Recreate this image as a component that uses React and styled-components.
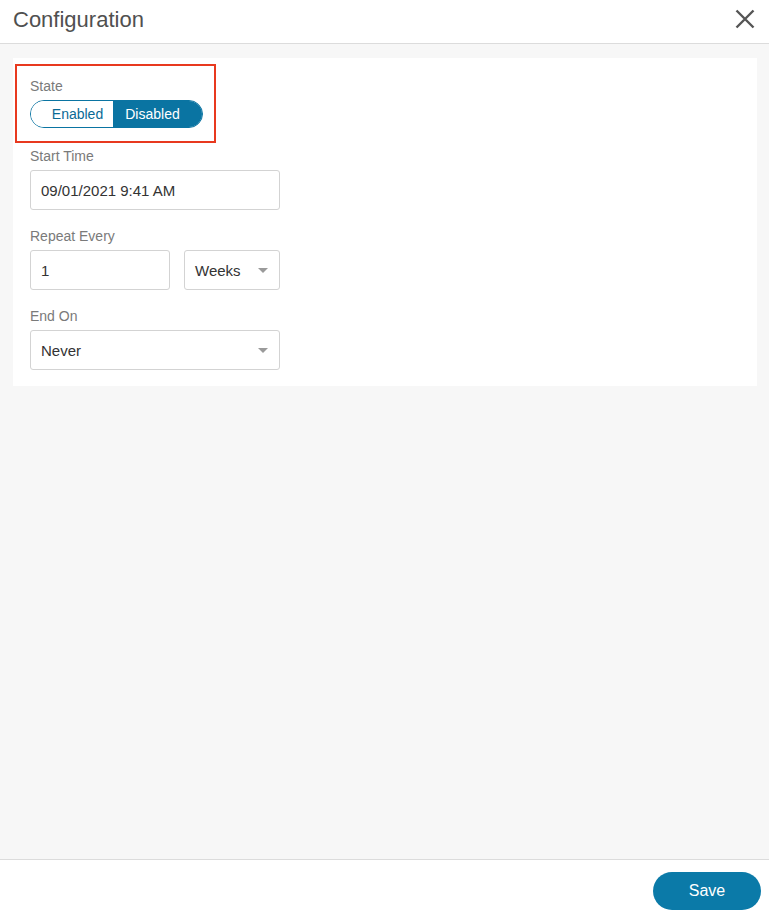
import styled, { createGlobalStyle } from 'styled-components';

const GlobalStyle = createGlobalStyle`
  html, body {
    margin: 0;
    padding: 0;
    height: 100%;
  }
  body {
    font-family: 'Liberation Sans', Arial, sans-serif;
    background: #ffffff;
  }
  #root {
    height: 100%;
  }
`;

const Panel = styled.div`
  display: flex;
  flex-direction: column;
  height: 920px;
  width: 769px;
`;

const Header = styled.header`
  display: flex;
  align-items: center;
  justify-content: space-between;
  height: 43px;
  padding: 0 12px 0 13px;
  border-bottom: 1px solid #dcdcdc;
  background: #fff;
  flex-shrink: 0;
`;

const Title = styled.h1`
  margin: 0;
  font-size: 22px;
  font-weight: 400;
  color: #505050;
  line-height: 1;
  margin-top: -3px;
`;

const CloseButton = styled.button`
  display: flex;
  align-items: center;
  justify-content: center;
  width: 24px;
  height: 24px;
  padding: 0;
  border: 0;
  background: none;
  cursor: pointer;
  margin-top: -5px;
`;

const Body = styled.main`
  flex: 1;
  background: #f7f7f7;
  padding: 14px 12px 0 13px;
`;

const Card = styled.section`
  background: #fff;
  padding: 6px 17px 16px 17px;
`;

const Highlight = styled.div`
  margin: 0 -15px;
  padding: 12px 13px 13px 13px;
  border: 2px solid #e8391f;
  width: 171px;
`;

const Field = styled.div`
  margin-top: ${(p) => p.$top || 0}px;
`;

const Label = styled.div`
  font-size: 14px;
  line-height: 16px;
  color: #7a7a7a;
  margin-bottom: 6px;
`;

const Row = styled.div`
  display: flex;
  gap: 14px;
`;

const Toggle = styled.div`
  display: flex;
  width: 173px;
  height: 28px;
  border: 1px solid #0a74a2;
  border-radius: 14px;
  overflow: hidden;
  box-sizing: border-box;
`;

const ToggleOption = styled.button`
  flex: none;
  box-sizing: border-box;
  width: ${(p) => p.$width}px;
  border: 0;
  margin: 0;
  padding: ${(p) => (p.$active ? '0 10px 0 0' : '0 0 0 11px')};
  font-family: inherit;
  font-size: 14px;
  background: ${(p) => (p.$active ? '#0a74a2' : '#fff')};
  color: ${(p) => (p.$active ? '#fff' : '#0a6a95')};
  cursor: pointer;
`;

const TextInput = styled.input`
  box-sizing: border-box;
  width: ${(p) => p.$width}px;
  height: 40px;
  border: 1px solid #d3d3d3;
  border-radius: 3px;
  padding: 0 10px;
  font-family: inherit;
  font-size: 15px;
  color: #333;
  background: #fff;
  outline: none;
`;

const SelectBox = styled.div`
  box-sizing: border-box;
  position: relative;
  display: flex;
  align-items: center;
  width: ${(p) => p.$width}px;
  height: 40px;
  border: 1px solid #d3d3d3;
  border-radius: 3px;
  padding: 0 10px;
  font-size: 15px;
  color: #333;
  background: #fff;
  cursor: pointer;
`;

const Caret = styled.span`
  position: absolute;
  right: 11px;
  top: 17px;
  width: 0;
  height: 0;
  border-left: 5px solid transparent;
  border-right: 5px solid transparent;
  border-top: 5px solid #9a9a9a;
`;

const Footer = styled.footer`
  display: flex;
  justify-content: flex-end;
  align-items: center;
  height: 61px;
  padding: 2px 8px 0 0;
  border-top: 1px solid #dcdcdc;
  background: #fff;
  flex-shrink: 0;
  box-sizing: border-box;
`;

const SaveButton = styled.button`
  width: 108px;
  height: 38px;
  border: 0;
  border-radius: 19px;
  background: #0b7aa8;
  color: #fff;
  font-family: inherit;
  font-size: 16px;
  cursor: pointer;
`;

function Select({ value, width }) {
  return (
    <SelectBox $width={width}>
      {value}
      <Caret />
    </SelectBox>
  );
}

export default function App() {
  return (
    <>
      <GlobalStyle />
      <Panel>
        <Header>
          <Title>Configuration</Title>
          <CloseButton aria-label="Close">
            <svg width="20" height="20" viewBox="0 0 20 20">
              <path d="M1.5 1.5 L18.5 18.5 M18.5 1.5 L1.5 18.5" stroke="#555" strokeWidth="2.4" fill="none" />
            </svg>
          </CloseButton>
        </Header>

        <Body>
          <Card>
            <Highlight>
              <Label>State</Label>
              <Toggle>
                <ToggleOption $width={82}>Enabled</ToggleOption>
                <ToggleOption $width={89} $active>Disabled</ToggleOption>
              </Toggle>
            </Highlight>

            <Field $top={5}>
              <Label>Start Time</Label>
              <TextInput $width={250} defaultValue="09/01/2021 9:41 AM" />
            </Field>

            <Field $top={18}>
              <Label>Repeat Every</Label>
              <Row>
                <TextInput $width={140} defaultValue="1" />
                <Select width={96} value="Weeks" />
              </Row>
            </Field>

            <Field $top={18}>
              <Label>End On</Label>
              <Select width={250} value="Never" />
            </Field>
          </Card>
        </Body>

        <Footer>
          <SaveButton>Save</SaveButton>
        </Footer>
      </Panel>
    </>
  );
}
